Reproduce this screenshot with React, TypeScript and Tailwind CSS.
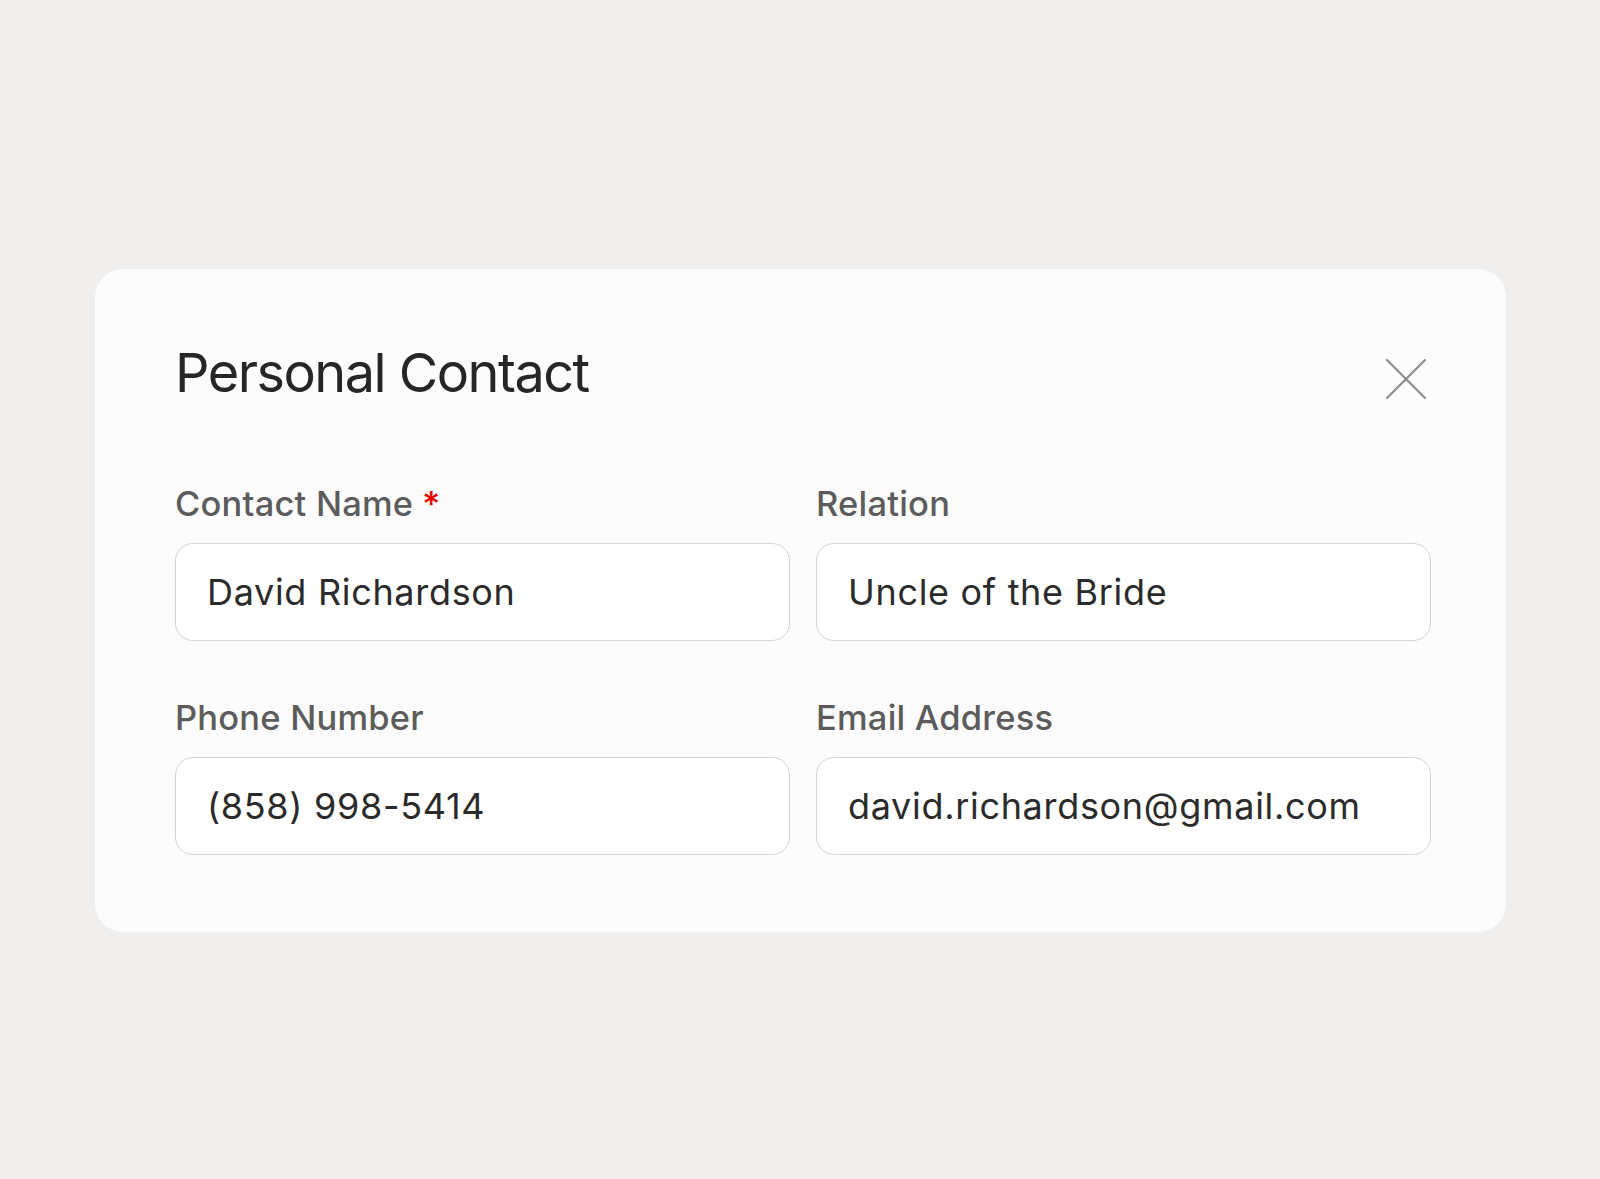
const fields = [
  { label: 'Contact Name', value: 'David Richardson', required: true },
  { label: 'Relation', value: 'Uncle of the Bride' },
  { label: 'Phone Number', value: '(858) 998-5414' },
  { label: 'Email Address', value: 'david.richardson@gmail.com' },
];

function CloseIcon() {
  return (
    <svg width="48" height="48" viewBox="0 0 48 48" fill="none" stroke="#8c8c8c" strokeWidth="2.2" strokeLinecap="round">
      <path d="M4 5L42 43" />
      <path d="M42 5L4 43" />
    </svg>
  );
}

export default function App() {
  return (
    <div className="min-h-screen bg-[#f0efed] pl-[95px] pr-[94px] pt-[269px]" style={{ fontFamily: 'Inter, "Noto Sans", sans-serif' }}>
      <div className="rounded-[28px] bg-[#fcfcfc] pl-[80px] pr-[75px] pt-[72px] pb-[77px]">
        <div className="flex items-start justify-between">
          <h1 className="text-[54px] leading-[64px] font-normal tracking-[-0.028em] text-[#262626]">Personal Contact</h1>
          <button className="mt-[14px] h-12 w-12" aria-label="Close">
            <CloseIcon />
          </button>
        </div>
        <div className="mt-[79px] grid grid-cols-2 gap-x-[26px] gap-y-[57px]">
          {fields.map((f) => (
            <label key={f.label} className="flex flex-col">
              <span className="text-[34.5px] leading-[40px] font-medium tracking-[0.006em] text-[#5c5c5c]">
                {f.label}
                {f.required && <span className="ml-[9px] text-[#e60000]">*</span>}
              </span>
              <input
                readOnly
                value={f.value}
                className="mt-[19px] h-[98px] w-full rounded-[18px] border border-[#d3d3d7] bg-white px-[31px] text-[36px] tracking-[0.019em] text-[#2b2b2b] outline-none"
              />
            </label>
          ))}
        </div>
      </div>
    </div>
  );
}
